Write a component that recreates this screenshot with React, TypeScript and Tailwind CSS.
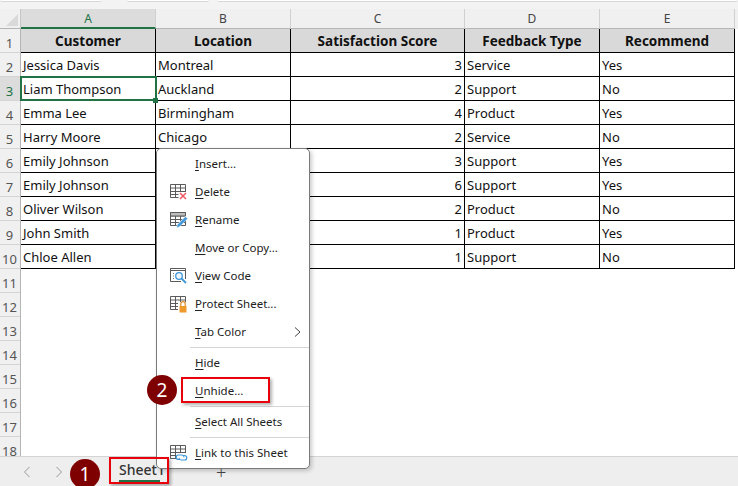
const colHdr = [
  { l: 'A', w: 'w-[135px]' },
  { l: 'B', w: 'w-[135px]' },
  { l: 'C', w: 'w-[174px]' },
  { l: 'D', w: 'w-[135px]' },
  { l: 'E', w: 'w-[135px]' },
];
const head = ['Customer', 'Location', 'Satisfaction Score', 'Feedback Type', 'Recommend'];
const rows: [string, string, string, string, string][] = [
  ['Jessica Davis', 'Montreal', '3', 'Service', 'Yes'],
  ['Liam Thompson', 'Auckland', '2', 'Support', 'No'],
  ['Emma Lee', 'Birmingham', '4', 'Product', 'Yes'],
  ['Harry Moore', 'Chicago', '2', 'Service', 'No'],
  ['Emily Johnson', '', '3', 'Support', 'Yes'],
  ['Emily Johnson', '', '6', 'Support', 'Yes'],
  ['Oliver Wilson', '', '2', 'Product', 'No'],
  ['John Smith', '', '1', 'Product', 'Yes'],
  ['Chloe Allen', '', '1', 'Support', 'No'],
];

function GridIco({ children }: { children?: React.ReactNode }) {
  return (
    <svg width="18" height="18" viewBox="0 0 18 18" fill="none" className="block">
      <path d="M.5 1.500h15v13H.5zM.5 5h15M.5 8.500h15M.5 11.500h15M5.500 1.500v13M10.500 1.500v13" stroke="#5a5a5a" />
      {children}
    </svg>
  );
}
const icons: Record<string, React.ReactNode> = {
  del: (
    <GridIco>
      <path d="M8.500 9h9.500v9H8.500z" fill="#fff" />
      <path d="M10 10l6 6M16 10l-6 6" stroke="#ee5a64" strokeWidth="1.500" />
    </GridIco>
  ),
  ren: (
    <GridIco>
      <path d="M.5 1.500h15V5H.5z" fill="#bdbdbd" stroke="#5a5a5a" />
      <path d="M6 17.500l1-4 8.500-8.500 2.500 2.500-8.500 8.500z" fill="#fff" />
      <path d="M7.300 16.200l.8-2.700 7.400-7.400 1.500 1.600-7.400 7.400z" fill="#3f97d8" stroke="#3f97d8" strokeWidth=".7" />
    </GridIco>
  ),
  code: (
    <svg width="18" height="18" viewBox="0 0 18 18" fill="none" className="block">
      <path d="M.5 1.500h15v13H.5z" stroke="#5a5a5a" />
      <path d="M.5 3.500h15" stroke="#5a5a5a" />
      <path d="M3 6.500h1M3 9h1M3 11.500h1" stroke="#777" />
      <path d="M11 12h7v6h-7z" fill="#fff" />
      <circle cx="9" cy="9" r="3.300" stroke="#3f97d8" strokeWidth="1.300" fill="#eef6fc" />
      <path d="M11.500 11.500l4.500 4.500" stroke="#3f97d8" strokeWidth="1.800" />
    </svg>
  ),
  prot: (
    <GridIco>
      <path d="M8 7h10v11H8z" fill="#fff" />
      <path d="M10.800 11V8.800a2.200 2.200 0 014.400 0V11" stroke="#e58b22" strokeWidth="1.200" />
      <path d="M9.500 11h7v6.500h-7z" fill="#ee9a2c" />
    </GridIco>
  ),
  link: (
    <GridIco>
      <path d="M6 9h12v9H6z" fill="#fff" />
      <path d="M10 15.500H8.500a2.200 2.200 0 010-4.500h3.500a2.200 2.200 0 012 2.200M13 11.500h1.500a2.200 2.200 0 010 4.500h-3.500a2.200 2.200 0 01-2-2.200" stroke="#3f97d8" strokeWidth="1.200" />
    </GridIco>
  ),
};

function Ul({ t, u }: { t: string; u: number }) {
  return <>{t.slice(0, u)}<span className="underline underline-offset-2 decoration-1">{t[u]}</span>{t.slice(u + 1)}</>;
}
function Item({ t, u = 0, ico, arrow }: { t: string; u?: number; ico?: string; arrow?: boolean }) {
  return (
    <div className="h-7 flex items-center relative">
      <div className="w-[38px] pl-[13px] shrink-0">{ico ? icons[ico] : null}</div>
      <span><Ul t={t} u={u} /></span>
      {arrow ? (
        <svg width="7" height="10" viewBox="0 0 7 10" className="absolute right-[8px] top-[9px]" fill="none"><path d="M1 .5l5 4.500-5 4.500" stroke="#444" /></svg>
      ) : null}
    </div>
  );
}
const Sep = () => <div className="h-px bg-[#d5d5d5] ml-[33px] my-[1px]" />;

function Badge({ n, cls }: { n: string; cls: string }) {
  return (
    <div className={`absolute ${cls} w-[30px] h-[30px] rounded-full bg-[#7f0000] text-white flex items-center justify-center text-[19px] leading-none`}>{n}</div>
  );
}

export default function App() {
  return (
    <div className="relative w-[738px] h-[486px] overflow-hidden bg-white font-['Noto_Sans',sans-serif] text-[#111] flex flex-col text-[13px]">
      <div className="h-[9px] bg-[#f3f3f3] shrink-0 flex items-start">
        <div className="w-[102px] h-[2px] bg-white border-b border-[#d8d8d8] rounded-b" />
        <div className="w-[25px]" />
        <div className="w-[82px] h-[2px] bg-white border-b border-[#d8d8d8] rounded-b" />
        <div className="w-[8px]" />
        <div className="w-[521px] h-[2px] bg-white border-b border-[#d8d8d8] rounded-b" />
      </div>
      {/* column header */}
      <div className="h-5 flex shrink-0 bg-[#f0f0f0]">
        <div className="w-[21px] bg-[#f0f0f0] border-r border-[#c6c6c6] border-b border-b-[#b5b5b5] relative shrink-0">
          <div className="absolute right-[2px] bottom-[2px] w-0 h-0 border-l-[12px] border-l-transparent border-b-[12px] border-b-[#d9d9d9]" />
        </div>
        {colHdr.map((c, i) => (
          <div key={c.l} className={`${c.w} shrink-0 text-center leading-[19px] text-[12px] border-r border-[#d0d0d0] ${i === 0 ? 'bg-[#dcdcdc] border-b-2 border-b-[#217346] text-[#217346]' : 'text-[#444] border-b border-b-[#b5b5b5]'}`}>{c.l}</div>
        ))}
      </div>
      {/* body */}
      <div className="flex flex-1 min-h-0">
        <div className="w-[21px] shrink-0 bg-[#f0f0f0] border-r border-[#b5b5b5] text-[13px] text-[#555] overflow-hidden">
          {Array.from({ length: 18 }).map((_, i) => (
            <div key={i} className={`h-6 flex items-end justify-center pr-[1px] leading-[17px] border-b border-[#d4d4d4] ${i === 2 ? 'bg-[#dcdcdc] text-[#217346]' : ''}`}>{i + 1}</div>
          ))}
        </div>
        <div className="relative">
          <div className="grid grid-cols-[135px_135px_174px_135px_135px] w-[714px]">
            {head.map((h) => (
              <div key={h} className="h-6 bg-[#d9d9d9] font-bold text-center leading-[25px] text-[13.5px] border-b border-black border-r border-r-black">{h}</div>
            ))}
            {rows.map((r, ri) => r.map((c, ci) => (
              <div key={`${ri}-${ci}`} className={`h-6 px-[2px] leading-[25px] border-b border-black ${ci === 2 ? 'text-right' : ''} border-r border-r-black`}>{c}</div>
            )))}
          </div>
          <div className="absolute left-[-1px] top-[47px] w-[137px] h-[25px] border-2 border-[#217346]" />
          <div className="absolute left-[132px] top-[69px] w-[5px] h-[5px] bg-[#217346]" />
        </div>
      </div>
      {/* sheet bar */}
      <div className="h-[30px] shrink-0 bg-[#eeeeee] border-t border-[#d4d4d4] flex items-center relative">
        <svg width="8" height="12" viewBox="0 0 8 12" className="ml-[23px]" fill="none"><path d="M6.500 1l-5 5 5 5" stroke="#999" /></svg>
        <svg width="8" height="12" viewBox="0 0 8 12" className="ml-[24px]" fill="none"><path d="M1.500 1l5 5-5 5" stroke="#999" /></svg>
        <div className="ml-[49px] w-[60px] h-full relative text-[#333] text-[14px] font-medium leading-[25px] text-center">
          Sheet1
          <div className="absolute left-[7px] right-[12px] bottom-[4px] h-[2px] bg-[#217346]" />
        </div>
        <span className="ml-[44px] text-[18px] font-light leading-none text-[#444]">+</span>
      </div>
      {/* overlays */}
      <div className="absolute left-[156px] top-[148px] w-[154px] h-[321px] bg-white border border-[#7a7a7a] rounded-[5px] shadow-[2px_2px_4px_rgba(0,0,0,0.2)] text-[11.5px] text-[#222] py-[1px]">
        <Item t="Insert..." />
        <Item t="Delete" ico="del" />
        <Item t="Rename" ico="ren" />
        <Item t="Move or Copy..." />
        <Item t="View Code" ico="code" />
        <Item t="Protect Sheet..." ico="prot" />
        <Item t="Tab Color" arrow />
        <Sep />
        <Item t="Hide" />
        <Item t="Unhide..." />
        <Sep />
        <Item t="Select All Sheets" />
        <Sep />
        <Item t="Link to this Sheet" ico="link" />
      </div>
      <div className="absolute left-[181px] top-[377px] w-[89px] h-[26px] border-2 border-[#e8000b] shadow-[2px_2px_3px_rgba(0,0,0,0.3)]" />
      <div className="absolute left-[109px] top-[457px] w-[60px] h-[27px] border-2 border-[#e8000b] shadow-[2px_2px_3px_rgba(0,0,0,0.3)]" />
      <Badge n="2" cls="left-[147px] top-[375px]" />
      <Badge n="1" cls="left-[70px] top-[459px]" />
    </div>
  );
}
